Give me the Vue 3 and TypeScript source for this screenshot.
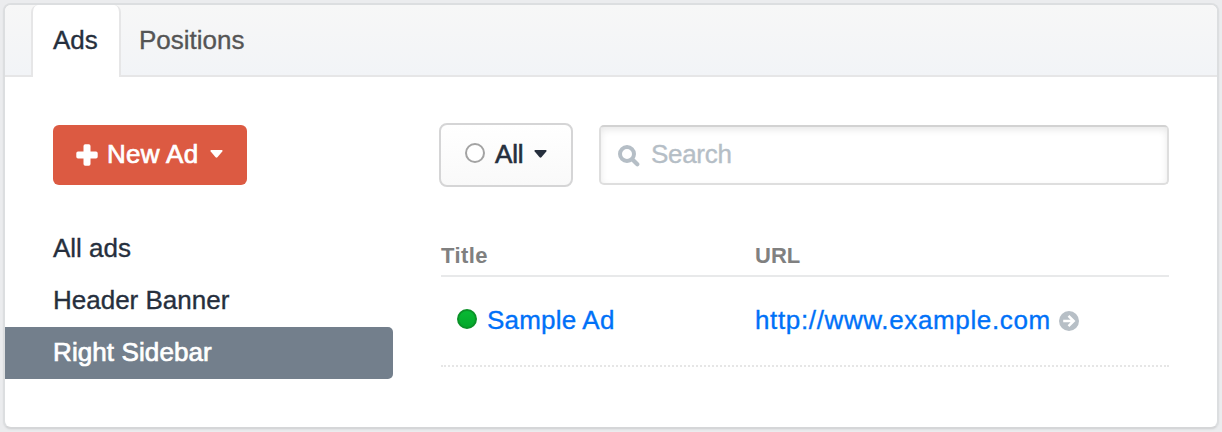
<script setup lang="ts">
import { ref } from 'vue'

const tabs = ['Ads', 'Positions']
const activeTab = ref('Ads')

const groups = ['All ads', 'Header Banner', 'Right Sidebar']
const activeGroup = ref('Right Sidebar')

const search = ref('')
const ads = [{ title: 'Sample Ad', url: 'http://www.example.com' }]
</script>

<template>
  <main class="page">
    <section class="panel">
      <nav class="tabs">
        <a
          v-for="tab in tabs"
          :key="tab"
          class="tab"
          :class="{ active: tab === activeTab }"
          @click="activeTab = tab"
        >{{ tab }}</a>
      </nav>

      <div class="body">
        <aside class="sidebar">
          <button class="new-ad" type="button">
            <svg class="plus" viewBox="0 0 22 22" width="22" height="22">
              <path d="M9.200.3h3.600q1.700 0 1.700 1.700v5.500H20q1.700 0 1.700 1.700v3.600q0 1.700-1.700 1.700h-5.500V20q0 1.700-1.700 1.700H9.200q-1.700 0-1.700-1.700v-5.500H2q-1.700 0-1.700-1.700V9.200q0-1.700 1.700-1.700h5.500V2q0-1.700 1.700-1.700z" fill="currentColor" />
            </svg>
            <span class="new-label">New Ad</span>
            <svg class="caret" viewBox="0 0 13 8" width="13" height="8">
              <path d="M1.200 0h10.600q1.200.3.5 1.400L7.400 7.200q-.9.900-1.800 0L.7 1.400Q0 .3 1.200 0z" fill="currentColor" />
            </svg>
          </button>
          <ul class="groups">
            <li
              v-for="group in groups"
              :key="group"
              class="group"
              :class="{ active: group === activeGroup }"
              @click="activeGroup = group"
            >{{ group }}</li>
          </ul>
        </aside>

        <div class="content">
          <div class="toolbar">
            <button class="filter" type="button">
              <span class="ring"></span>
              <span class="filter-label">All</span>
              <svg class="caret" viewBox="0 0 13 8" width="13" height="8">
                <path d="M1.200 0h10.600q1.200.3.5 1.400L7.400 7.200q-.9.900-1.800 0L.7 1.400Q0 .3 1.200 0z" fill="currentColor" />
              </svg>
            </button>
            <label class="search">
              <svg viewBox="0 0 22 22" width="22" height="22">
                <circle cx="9" cy="9" r="7" fill="none" stroke="currentColor" stroke-width="4" />
                <path d="M14.200 14.200L19.300 19.300" stroke="currentColor" stroke-width="4.200" stroke-linecap="round" />
              </svg>
              <input v-model="search" type="text" placeholder="Search" />
            </label>
          </div>

          <div class="table">
            <div class="head">
              <span class="head-title">Title</span>
              <span>URL</span>
            </div>
            <div v-for="ad in ads" :key="ad.title" class="row">
              <div class="title">
                <span class="dot"></span>
                <a class="name">{{ ad.title }}</a>
              </div>
              <div class="link">
                <a class="url">{{ ad.url }}</a>
                <svg viewBox="0 0 20 20" width="20" height="20">
                  <circle cx="10" cy="10" r="10" fill="#b7bfc6" />
                  <path d="M4.200 10h10.200M9.500 4.800l5.200 5.200-5.200 5.200" fill="none" stroke="#fff" stroke-width="2.500" />
                </svg>
              </div>
            </div>
          </div>
        </div>
      </div>
    </section>
  </main>
</template>

<style>
body {
  margin: 0;
  background: #ebecee;
}
</style>

<style scoped>
.page {
  box-sizing: border-box;
  height: 432px;
  padding: 3px;
  overflow: hidden;
  background: #ebecee;
  color: #262f3d;
  font: 26px/32px "Liberation Sans", Arial, sans-serif;
  -webkit-text-stroke: 0.35px currentColor;
}

.panel {
  box-sizing: border-box;
  height: 426px;
  border: 2px solid #dcdee0;
  border-bottom-color: #d5d6d8;
  border-radius: 8px;
  background: #fff;
  box-shadow: 0 1px 2px rgba(0, 0, 0, 0.05);
}

.tabs {
  display: flex;
  box-sizing: border-box;
  height: 72px;
  padding-left: 26px;
  border-bottom: 2px solid #e6e6e7;
  border-radius: 6px 6px 0 0;
  background: linear-gradient(#f7f7f7, #f2f4f7);
}

.tab {
  box-sizing: border-box;
  height: 72px;
  padding: 19px 18px 0;
  color: #555;
  cursor: pointer;
}

.tab.active {
  width: 90px;
  padding-left: 20px;
  border: 2px solid #e6e6e7;
  border-width: 0 2px;
  border-radius: 7px 7px 0 0;
  background: #fff;
  color: #262f3d;
}

.body {
  display: flex;
  padding: 46px 48px 0 0;
}

.sidebar {
  width: 388px;
  margin-right: 46px;
  padding-top: 2px;
}

button {
  display: flex;
  align-items: center;
  box-sizing: border-box;
  font: inherit;
  color: inherit;
}

.new-ad {
  width: 194px;
  height: 60px;
  margin-left: 48px;
  padding: 0 0 2px 23px;
  border: 0;
  border-radius: 6px;
  background: #dc5a42;
  color: #fff;
  -webkit-text-stroke: 0.7px #fff;
}

.new-label {
  letter-spacing: 0.3px;
}

.plus {
  margin: 2px 9px 0 0;
}

.caret {
  margin-left: 11px;
}

.new-ad .caret {
  margin-left: 12px;
}

.groups {
  margin: 38px 0 0;
  padding: 0;
  list-style: none;
}

.group {
  box-sizing: border-box;
  height: 52px;
  padding: 9px 0 0 48px;
  cursor: pointer;
}

.group.active {
  border-radius: 0 5px 5px 0;
  background: #737f8c;
  color: #fff;
  letter-spacing: 0.1px;
  -webkit-text-stroke: 0.7px #fff;
}

.content {
  flex: 1;
}

.toolbar {
  display: flex;
  align-items: center;
  gap: 26px;
}

.filter {
  width: 134px;
  height: 64px;
  padding: 0 0 2px 24px;
  border: 2px solid #d5d5d6;
  border-radius: 8px;
  background: linear-gradient(#fff, #f9f9f9);
  -webkit-text-stroke: 0.6px currentColor;
}

.filter-label {
  letter-spacing: -0.2px;
}

.ring {
  box-sizing: border-box;
  width: 20px;
  height: 20px;
  margin: 0 10px 2px 0;
  border: 2px solid #a3a3a3;
  border-radius: 50%;
  background: #fff;
}

.search {
  display: flex;
  flex: 1;
  align-items: center;
  box-sizing: border-box;
  height: 60px;
  padding-left: 17px;
  border: 2px solid #dedede;
  border-top-color: #d2d2d2;
  border-radius: 5px;
  background: #fff;
  box-shadow: inset 0 3px 7px rgba(0, 0, 0, 0.09);
  color: #b5bec6;
}

.search svg {
  margin-top: 2px;
}

.search input {
  flex: 1;
  min-width: 0;
  height: 32px;
  margin: 0 0 2px 11px;
  padding: 0;
  border: 0;
  outline: 0;
  background: transparent;
  font: inherit;
  letter-spacing: -0.3px;
  color: #262f3d;
}

.search input::placeholder {
  color: #b5bec6;
  opacity: 1;
}

.table {
  margin: 54px 0 0 2px;
}

.head,
.row {
  display: grid;
  grid-template-columns: 314px 1fr;
}

.head {
  box-sizing: border-box;
  height: 36px;
  border-bottom: 2px solid #e8e9ea;
  color: #808080;
  font-size: 22px;
  font-weight: 700;
  line-height: 30px;
  -webkit-text-stroke: 0;
}

.head-title {
  letter-spacing: 0.4px;
}

.row {
  align-items: center;
  box-sizing: border-box;
  height: 90px;
  padding-bottom: 2px;
  border-bottom: 2px dotted #e6e6e6;
  color: #0071f8;
}

.title,
.link {
  display: flex;
  align-items: center;
}

.dot {
  box-sizing: border-box;
  width: 20px;
  height: 20px;
  margin: 0 10px 2px 16px;
  border: 2px solid #0b9228;
  border-radius: 50%;
  background: linear-gradient(#09b934, #04a82b);
}

.name {
  letter-spacing: 0.2px;
}

.url {
  letter-spacing: 0.64px;
}

.link svg {
  margin: 2px 0 0 8px;
}
</style>
